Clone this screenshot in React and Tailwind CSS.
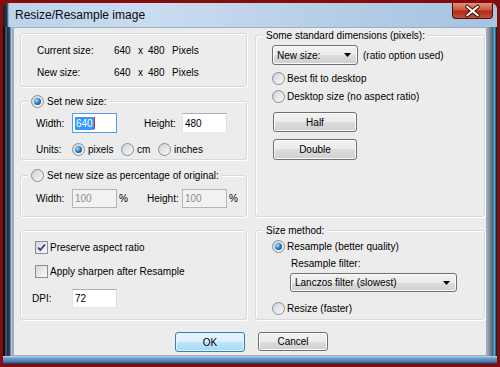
import React from "react";

// Win7 style widgets
const Radio = ({ checked }) => (
  <span className="inline-flex w-[13px] h-[13px] shrink-0 items-center justify-center rounded-full border border-[#8a8d92] bg-[linear-gradient(135deg,#cfd2d6,#f9f9f9)]">
    {checked && (
      <span className="w-[7px] h-[7px] rounded-full bg-[radial-gradient(circle_at_35%_35%,#a4ddfb,#1f74ba_55%,#0c3c6e)]" />
    )}
  </span>
);

const Check = ({ checked }) => (
  <span className="inline-flex w-[13px] h-[13px] shrink-0 items-center justify-center border border-[#8a8d92] bg-[linear-gradient(135deg,#d4d6d9,#fafafa)]">
    {checked && (
      <svg width="11" height="11" viewBox="0 0 11 11">
        <path d="M2 5.5 L4.3 8 L9 2.5" fill="none" stroke="#21378a" strokeWidth="1.7" />
      </svg>
    )}
  </span>
);

const Field = ({ children, disabled, focused, className = "" }) => (
  <div
    className={`flex items-center pl-[2px] border ${
      focused
        ? "border-[#569de5]"
        : disabled
        ? "border-[#b5b5b5] bg-[#f2f2f2] text-[#8d8d8d]"
        : "border-[#abadb3] border-l-[#e2e3ea] border-r-[#dbdfe6] border-b-[#e3e9ef]"
    } ${disabled ? "" : "bg-white"} ${className}`}
  >
    {children}
  </div>
);

const Btn = ({ children, focused, className = "" }) => (
  <div
    className={`flex items-center justify-center rounded-[3px] border ${
      focused
        ? "border-[#3c7fb1] bg-[linear-gradient(#eaf6fd_0%,#d9f0fc_50%,#bee6fd_50%,#a7d9f5_100%)] shadow-[inset_0_0_0_1px_#dff2fc]"
        : "border-[#707070] bg-[linear-gradient(#f2f2f2_0%,#ebebeb_50%,#dddddd_50%,#cfcfcf_100%)] shadow-[inset_0_0_0_1px_#fbfbfb]"
    } ${className}`}
  >
    {children}
  </div>
);

const Arrow = () => (
  <svg width="7" height="4" viewBox="0 0 7 4" className="shrink-0">
    <path d="M0 0 H7 L3.5 4 Z" fill="#000" />
  </svg>
);

const Combo = ({ text, className = "" }) => (
  <div
    className={`flex items-center justify-between pl-[4px] pr-[6px] rounded-[3px] border border-[#707070] bg-[linear-gradient(#f2f2f2_0%,#ebebeb_50%,#dddddd_50%,#cfcfcf_100%)] shadow-[inset_0_0_0_1px_#fbfbfb] ${className}`}
  >
    <span>{text}</span>
    <Arrow />
  </div>
);

const Group = ({ caption, className = "", children }) => (
  <div
    className={`relative rounded-[3px] border border-[#d2dbe1] shadow-[inset_1px_1px_0_#fff,1px_1px_0_#fff] ${className}`}
  >
    {caption && (
      <div className="absolute -top-[7px] left-[7px] flex h-[13px] items-center gap-[3px] bg-[#ececec] px-[3px]">
        {caption}
      </div>
    )}
    {children}
  </div>
);

const CloseX = () => (
  <svg width="41" height="16" viewBox="0 0 41 16">
    <path d="M15 3.5 L26 12.5 M26 3.5 L15 12.5" stroke="#3a0d08" strokeWidth="4.2" strokeLinecap="round" />
    <path d="M15 3.5 L26 12.5 M26 3.5 L15 12.5" stroke="#fff" strokeWidth="2.2" strokeLinecap="round" />
  </svg>
);

export default function App() {
  return (
    <div
      className="w-[500px] h-[367px] bg-[#830c0c] p-[3px] text-[10px] leading-[13px] text-black"
      style={{ fontFamily: '"Liberation Sans", Arial, sans-serif' }}
    >
      <div className="relative flex h-[361px] w-[494px] flex-col overflow-hidden rounded-t-[6px] bg-[linear-gradient(90deg,#141b26_0px,#2b3b52_4px,#bcd3ec_6px,#cadcf0_30%,#b4cce6_70%,#a7c3df_100%)]">
        {/* title bar */}
        <div className="flex h-[24px] shrink-0 items-center pl-[12px] text-[12px] text-[#0b0b0b]">
          Resize/Resample image
        </div>
        <div className="absolute right-[4px] top-0 flex h-[16px] w-[41px] items-center justify-center rounded-b-[4px] border border-t-0 border-[#4a0f0a] bg-[linear-gradient(#e4937f,#c9543d_45%,#b22a14_55%,#c2503a)]">
          <CloseX />
        </div>

        {/* body */}
        <div className="flex h-[329px] shrink-0">
          <div className="w-[10px] shrink-0 bg-[linear-gradient(90deg,#0b0d12_0px,#0b0d12_2px,#71839c_3px,#1b2a40_4px,#2c4668_7px,#bccbdc_8px,#8ea4bc_10px)]" />
          <div className="grid w-[474px] grid-cols-[227px_230px] content-start gap-x-[8px] border border-[#9aaec4] bg-[#ececec] pl-[6px] pr-[1px] pt-[5px]">
            {/* left column */}
            <div className="flex flex-col">
              <Group className="h-[54px] pl-[16px] pt-[10px]">
                <div className="flex h-[13px] items-center">
                  <span className="w-[77px]">Current size:</span>
                  <span className="w-[24px]">640</span>
                  <span className="w-[10px]">x</span>
                  <span className="w-[24px]">480</span>
                  <span>Pixels</span>
                </div>
                <div className="mt-[9px] flex h-[13px] items-center">
                  <span className="w-[77px]">New size:</span>
                  <span className="w-[24px]">640</span>
                  <span className="w-[10px]">x</span>
                  <span className="w-[24px]">480</span>
                  <span>Pixels</span>
                </div>
              </Group>

              <Group
                className="mt-[14px] h-[59px] pl-[15px] pt-[11px]"
                caption={
                  <>
                    <Radio checked />
                    <span>Set new size:</span>
                  </>
                }
              >
                <div className="flex h-[20px] items-center">
                  <span className="w-[36px]">Width:</span>
                  <Field focused className="h-[20px] w-[45px]">
                    <span className="bg-[#3399ff] px-[1px] text-white">640</span>
                    <span className="h-[12px] w-[1px] bg-[#c0301e]" />
                  </Field>
                  <span className="ml-[27px] w-[38px]">Height:</span>
                  <Field className="h-[20px] w-[45px]">480</Field>
                </div>
                <div className="mt-[9px] flex h-[14px] items-center">
                  <span className="w-[36px]">Units:</span>
                  <span className="flex w-[49px] items-center gap-[3px]">
                    <Radio checked />
                    pixels
                  </span>
                  <span className="flex w-[37px] items-center gap-[3px]">
                    <Radio />
                    cm
                  </span>
                  <span className="flex items-center gap-[3px]">
                    <Radio />
                    inches
                  </span>
                </div>
              </Group>

              <Group
                className="mt-[15px] h-[42px] pl-[15px] pt-[13px]"
                caption={
                  <>
                    <Radio />
                    <span>Set new size as percentage of original:</span>
                  </>
                }
              >
                <div className="flex h-[19px] items-center">
                  <span className="w-[36px]">Width:</span>
                  <Field disabled className="h-[19px] w-[45px]">100</Field>
                  <span className="w-[30px] pl-[2px]">%</span>
                  <span className="w-[35px]">Height:</span>
                  <Field disabled className="h-[19px] w-[45px]">100</Field>
                  <span className="pl-[2px]">%</span>
                </div>
              </Group>

              <Group className="mt-[13px] h-[90px] pl-[14px] pt-[10px]">
                <div className="flex h-[13px] items-center gap-[2px]">
                  <Check checked />
                  <span>Preserve aspect ratio</span>
                </div>
                <div className="mt-[11px] flex h-[13px] items-center gap-[2px]">
                  <Check />
                  <span>Apply sharpen after Resample</span>
                </div>
                <div className="-ml-[3px] mt-[11px] flex h-[19px] items-center">
                  <span className="w-[40px]">DPI:</span>
                  <Field className="h-[19px] w-[45px]">72</Field>
                </div>
              </Group>
            </div>

            {/* right column */}
            <div className="flex flex-col">
              <Group
                className="mt-[2px] h-[182px] pl-[16px] pt-[9px]"
                caption={<span>Some standard dimensions (pixels):</span>}
              >
                <div className="flex items-center">
                  <Combo text="New size:" className="h-[20px] w-[86px]" />
                  <span className="ml-[5px]">(ratio option used)</span>
                </div>
                <div className="mt-[7px] flex h-[13px] items-center gap-[2px]">
                  <Radio />
                  <span>Best fit to desktop</span>
                </div>
                <div className="mt-[5px] flex h-[13px] items-center gap-[2px]">
                  <Radio />
                  <span>Desktop size (no aspect ratio)</span>
                </div>
                <Btn className="ml-[1px] mt-[9px] h-[20px] w-[84px]">Half</Btn>
                <Btn className="ml-[1px] mt-[7px] h-[21px] w-[84px]">Double</Btn>
              </Group>

              <Group
                className="mt-[13px] h-[90px] pl-[16px] pt-[9px]"
                caption={<span>Size method:</span>}
              >
                <div className="flex h-[13px] items-center gap-[2px]">
                  <Radio checked />
                  <span>Resample (better quality)</span>
                </div>
                <div className="ml-[19px] mt-[4px] flex h-[13px] items-center">
                  Resample filter:
                </div>
                <Combo text="Lanczos filter (slowest)" className="ml-[18px] mt-[3px] h-[19px] w-[167px]" />
                <div className="mt-[10px] flex h-[13px] items-center gap-[2px]">
                  <Radio />
                  <span>Resize (faster)</span>
                </div>
              </Group>
            </div>

            {/* dialog buttons */}
            <div className="col-span-2 mt-[12px] flex justify-center gap-[13px] pr-[2px]">
              <Btn focused className="h-[20px] w-[70px]">OK</Btn>
              <Btn className="h-[19px] w-[70px]">Cancel</Btn>
            </div>
          </div>
          <div className="w-[10px] shrink-0 bg-[linear-gradient(90deg,#a3adb8_0px,#7d8794_3px,#525c68_6px,#35b6ee_7px,#35b6ee_8px,#1a2433_9px)]" />
        </div>
        <div className="flex-1 bg-[linear-gradient(#c3d4e6,#6f9acb_30%,#4676ae_75%,#1b2636)]" />
      </div>
    </div>
  );
}
